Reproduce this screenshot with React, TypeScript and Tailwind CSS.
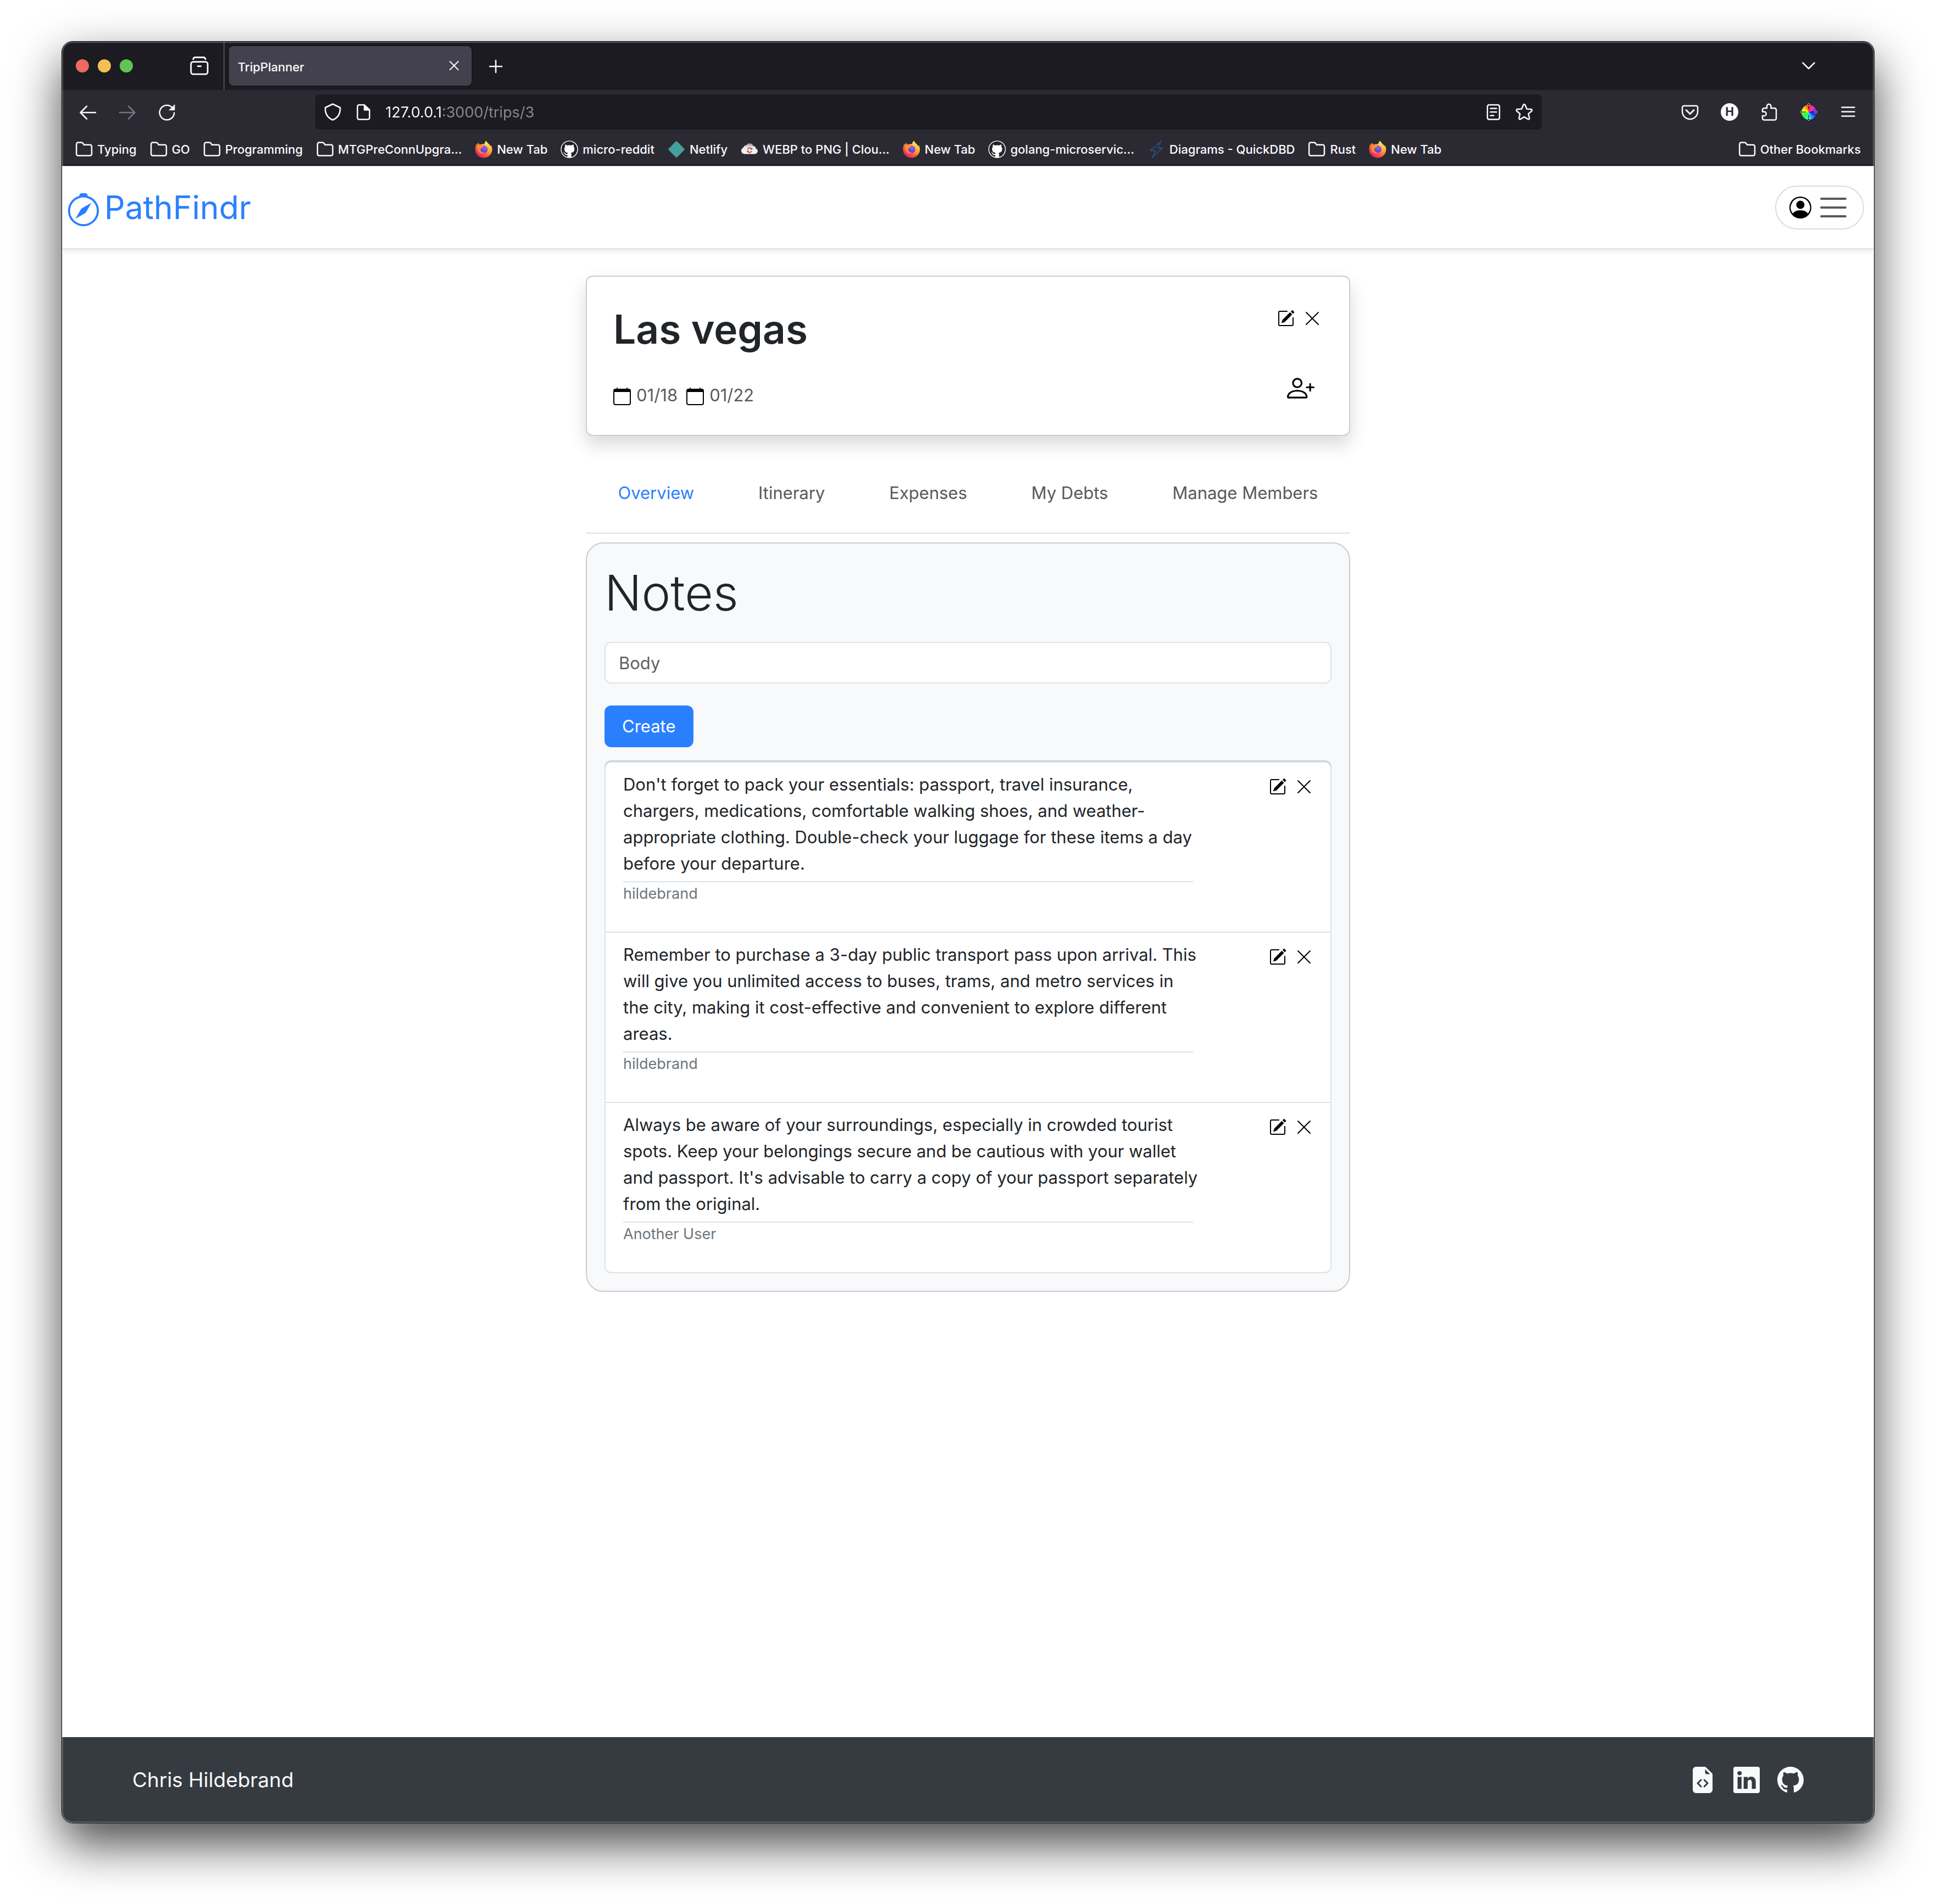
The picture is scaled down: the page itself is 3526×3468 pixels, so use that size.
import type { ReactNode } from "react";
import {
  BsCalendar,
  BsCompass,
  BsFileEarmarkCodeFill,
  BsGithub,
  BsLinkedin,
  BsPencilSquare,
  BsPersonCircle,
  BsPersonPlus,
  BsXLg,
} from "react-icons/bs";

/* ---------- Browser chrome icons ---------- */

type IconProps = { className?: string; children: ReactNode };

function Glyph({ className = "size-8", children }: IconProps) {
  return (
    <svg
      viewBox="0 0 32 32"
      className={className}
      fill="none"
      stroke="currentColor"
      strokeWidth="2.5"
      strokeLinecap="round"
      strokeLinejoin="round"
      aria-hidden="true"
    >
      {children}
    </svg>
  );
}

function FolderIcon() {
  return (
    <Glyph className="size-8 shrink-0">
      <path d="M2.2 24.500V6.500a3 3 0 0 1 3-3h6.200a3 3 0 0 1 2.300 1.100L16 7.700h11a3 3 0 0 1 3 3v13.800a3 3 0 0 1-3 3H5.200a3 3 0 0 1-3-3z" />
    </Glyph>
  );
}

function FirefoxIcon() {
  return (
    <svg viewBox="0 0 32 32" className="size-8 shrink-0" aria-hidden="true">
      <defs>
        <linearGradient id="ff-body" x1="0.85" y1="0.1" x2="0.2" y2="0.95">
          <stop offset="0" stopColor="#fff04f" />
          <stop offset="0.35" stopColor="#ffa436" />
          <stop offset="0.65" stopColor="#ff5a3c" />
          <stop offset="1" stopColor="#e31a72" />
        </linearGradient>
        <radialGradient id="ff-globe" cx="0.6" cy="0.25" r="0.8">
          <stop offset="0" stopColor="#a457f0" />
          <stop offset="0.6" stopColor="#6a4be0" />
          <stop offset="1" stopColor="#4c3fc9" />
        </radialGradient>
        <linearGradient id="ff-flame" x1="0.5" y1="0" x2="0.5" y2="1">
          <stop offset="0" stopColor="#fff25a" />
          <stop offset="1" stopColor="#ff9a2e" />
        </linearGradient>
      </defs>
      <path
        d="M20.500 0.600c-1.800 1.400-2.700 3.500-3 5.700C14.500 6 11.800 6.300 9.400 7.300 7.800 7 6.900 5.600 6.700 3.900 5.300 5 4.600 6.400 4.400 7.900 3.700 7.200 3.300 6.300 3.300 5.400 1.400 8.600 0.600 12 0.600 16c0 8.600 6.800 15.600 15.400 15.600S31.400 24.800 31.400 16.600c0-3-.9-6.300-2.600-8.600.2 1 .3 1.900.2 2.800C26.800 6.500 22.200 5 20.500.6z"
        fill="url(#ff-body)"
      />
      <circle cx="16.200" cy="16" r="6.800" fill="url(#ff-globe)" />
      <path
        d="M20.500 0.600c-2.800 2.200-3.500 5.700-2.900 8.500 3.500.9 6.100 3.600 6.100 7.200 0 2.800-1.600 5.200-4 6.500 5.500-.3 9.300-5 9.300-10.500C27.600 7.800 22.200 5.200 20.500.6z"
        fill="url(#ff-flame)"
        opacity="0.85"
      />
      <path
        d="M4.500 9.500c2.300-1 4.800-.9 6.800.3 1.600.2 3 .1 4.100.8-.3 1.600-2.300 2.200-3.600 2.700-.8.900-.4 1.900-2 2.600.3 3.800 3.800 6.600 8 5.700-2.600 2.500-8 2.400-10.800-.9-2.600-3-3-7.300-2.500-11.200z"
        fill="#ff8b34"
      />
    </svg>
  );
}

function GithubFavicon() {
  return (
    <svg viewBox="0 0 16 16" className="size-8 shrink-0" aria-hidden="true">
      <circle cx="8" cy="8" r="7.900" fill="#ffffff" />
      <path
        transform="translate(0.8 0.8) scale(0.9)"
        fill="#24232a"
        d="M8 0C3.580 0 0 3.580 0 8c0 3.540 2.290 6.530 5.470 7.590.4.070.55-.17.55-.38 0-.19-.01-.82-.01-1.490-2.010.37-2.530-.49-2.690-.94-.09-.23-.48-.94-.82-1.130-.28-.15-.68-.52-.01-.53.63-.01 1.080.58 1.230.82.720 1.210 1.870.87 2.330.66.070-.52.28-.87.51-1.070-1.780-.2-3.640-.89-3.640-3.950 0-.87.31-1.590.82-2.150-.08-.2-.36-1.020.08-2.120 0 0 .67-.21 2.200.82.640-.18 1.320-.27 2-.27s1.360.09 2 .27c1.530-1.040 2.200-.82 2.200-.82.440 1.100.16 1.920.08 2.120.51.56.82 1.270.82 2.150 0 3.070-1.870 3.750-3.650 3.950.29.25.54.73.54 1.480 0 1.070-.01 1.930-.01 2.200 0 .21.15.46.55.38A8.010 8.010 0 0 0 16 8c0-4.420-3.580-8-8-8"
      />
    </svg>
  );
}

function NetlifyIcon() {
  return (
    <svg viewBox="0 0 32 32" className="size-8 shrink-0" aria-hidden="true">
      <rect x="5" y="5" width="22" height="22" rx="2.200" fill="#43a09d" transform="rotate(45 16 16)" />
    </svg>
  );
}

function CloudIcon() {
  return (
    <svg viewBox="0 0 32 32" className="size-8 shrink-0" aria-hidden="true">
      <defs>
        <linearGradient id="cloud-fill" x1="0" y1="0" x2="0" y2="1">
          <stop offset="0" stopColor="#8a8a8c" />
          <stop offset="0.35" stopColor="#e8e8e8" />
          <stop offset="1" stopColor="#f7f7f7" />
        </linearGradient>
      </defs>
      <path
        d="M7.500 24.500C3.800 24.500 1 22 1 18.600c0-2.800 1.700-5 4.200-5.800.3-2.600 2.300-4.200 4.700-4 1.400-2.500 3.700-3.800 6.300-3.800 3.200 0 5.800 2 6.600 4.900 2.900-.1 4.800 1.900 4.700 4.500 2.100.8 3.500 2.500 3.500 4.700 0 3.100-2.400 5.400-5.600 5.400z"
        fill="url(#cloud-fill)"
      />
      <path d="M12.800 15.500a3.900 3.900 0 0 1 7-.1M19.800 19.300a3.900 3.900 0 0 1-7 .1" fill="none" stroke="#cf4a45" strokeWidth="2.200" />
      <path d="M21.200 12.800v4h-3.800zM11.400 21.800v-4h3.800z" fill="#cf4a45" />
    </svg>
  );
}

function BoltIcon() {
  return (
    <svg viewBox="0 0 32 32" className="size-8 shrink-0" aria-hidden="true">
      <path
        d="M24.500 1 5 18.500h9.500L8.500 31 27 13.500h-8.500z"
        fill="none"
        stroke="#245a94"
        strokeWidth="1.300"
        strokeLinejoin="round"
      />
    </svg>
  );
}

function ColorWheelIcon() {
  return (
    <span className="grid size-8 place-items-center">
      <span className="col-start-1 row-start-1 size-[27px] rounded-full bg-[conic-gradient(#ff2a1a,#ff2ad4_45deg,#7a1cff_80deg,#1c2bff_110deg,#1cc8ff_160deg,#2affc0_190deg,#2aff2a_240deg,#e8ff1c_290deg,#ff9a1c_330deg,#ff2a1a)]" />
      <svg viewBox="0 0 32 32" className="col-start-1 row-start-1 size-8" fill="none" aria-hidden="true">
        <path d="M16 4v7M16 21v7M4 16h7M21 16h7" stroke="#111111" strokeWidth="1.500" opacity="0.7" />
        <g fill="#1a1a1a" stroke="#e8e8e8" strokeWidth="0.800">
          <circle cx="16" cy="2.600" r="2" />
          <circle cx="16" cy="29.400" r="2" />
          <circle cx="2.600" cy="16" r="2" />
          <circle cx="29.400" cy="16" r="2" />
        </g>
      </svg>
    </span>
  );
}

/* ---------- Browser chrome ---------- */

const bookmarks: { label: string; icon: ReactNode }[] = [
  { label: "Typing", icon: <FolderIcon /> },
  { label: "GO", icon: <FolderIcon /> },
  { label: "Programming", icon: <FolderIcon /> },
  { label: "MTGPreConnUpgra...", icon: <FolderIcon /> },
  { label: "New Tab", icon: <FirefoxIcon /> },
  { label: "micro-reddit", icon: <GithubFavicon /> },
  { label: "Netlify", icon: <NetlifyIcon /> },
  { label: "WEBP to PNG | Clou...", icon: <CloudIcon /> },
  { label: "New Tab", icon: <FirefoxIcon /> },
  { label: "golang-microservic...", icon: <GithubFavicon /> },
  { label: "Diagrams - QuickDBD", icon: <BoltIcon /> },
  { label: "Rust", icon: <FolderIcon /> },
  { label: "New Tab", icon: <FirefoxIcon /> },
];

function Bookmark({ label, icon }: { label: string; icon: ReactNode }) {
  return (
    <a href="#" className="flex items-center gap-2 whitespace-nowrap">
      {icon}
      {label}
    </a>
  );
}

function TabStrip() {
  return (
    <div className="flex h-[88px] items-center bg-[#1c1b22]">
      <div className="flex items-center gap-4 pl-[25px]">
        <span className="size-6 rounded-full bg-[#ed6a5e]" />
        <span className="size-6 rounded-full bg-[#f5bf4f]" />
        <span className="size-6 rounded-full bg-[#61c554]" />
      </div>
      <button type="button" aria-label="Recent browsing" className="ml-[103px]">
        <Glyph className="size-9">
          <rect x="2.500" y="9.500" width="27" height="20" rx="3.500" />
          <path d="M6 5.200C6.500 3.200 7.800 2.200 9.500 2.200h13c1.700 0 3 1 3.500 3M13.500 16.500h5" />
        </Glyph>
      </button>
      <div className="ml-[26px] flex h-full items-center border-l-2 border-[#4b4b55] pl-2">
        <div className="flex h-18 w-[442px] items-center justify-between rounded-lg bg-[#42414d] pr-4 pl-4 shadow-[0_0_4px_rgba(0,0,0,0.5)]">
          <span className="pt-1">TripPlanner</span>
          <button type="button" aria-label="Close tab">
            <Glyph>
              <path d="M8.500 8l15 15M23.500 8l-15 15" strokeWidth="2" />
            </Glyph>
          </button>
        </div>
        <button type="button" aria-label="New tab" className="ml-7">
          <Glyph>
            <path d="M16 6v22M5 17h22" />
          </Glyph>
        </button>
      </div>
      <button type="button" aria-label="List all tabs" className="mr-[103px] ml-auto">
        <Glyph>
          <path d="M5.500 10.500 16 21 26.500 10.500" />
        </Glyph>
      </button>
    </div>
  );
}

function Toolbar() {
  return (
    <div className="flex items-center py-2 pr-[31px] pl-[31px]">
      <div className="flex items-center gap-10 pr-[254px]">
        <button type="button" aria-label="Back">
          <Glyph>
            <path d="M30 17H3M14 5.500 2.500 17 14 28.500" />
          </Glyph>
        </button>
        <button type="button" aria-label="Forward" className="text-[#75747f]">
          <Glyph>
            <path d="M2 17h27M18 5.500 29.500 17 18 28.500" />
          </Glyph>
        </button>
        <button type="button" aria-label="Reload">
          <Glyph>
            <path d="M29.300 17.500A13.300 13.300 0 1 1 25.800 8" />
            <path d="M30 3v9.500h-9.500z" fill="currentColor" strokeWidth="1" />
          </Glyph>
        </button>
      </div>
      <div className="flex h-16 flex-1 items-center gap-6 rounded-lg bg-[#1c1b22] px-4">
        <button type="button" aria-label="Tracking protection">
          <Glyph>
            <path d="M16 1.500 29.500 8c.6 9.500-3 18-13.500 22.500C5.500 26 1.900 17.500 2.500 8z" />
          </Glyph>
        </button>
        <button type="button" aria-label="Site information">
          <Glyph>
            <path d="M17 3H8a3 3 0 0 0-3 3v20.500a3 3 0 0 0 3 3h16a3 3 0 0 0 3-3V12z" />
            <path d="M17.500 3v9.500H27z" fill="currentColor" strokeWidth="2" />
          </Glyph>
        </button>
        <input
          type="text"
          aria-label="Address"
          defaultValue="127.0.0.1:3000/trips/3"
          className="h-12 min-w-0 flex-1 bg-[linear-gradient(90deg,#fbfbfe_102px,#8b8a94_102px)] bg-clip-text text-[27px] font-normal text-transparent outline-none"
        />
        <button type="button" aria-label="Reader view">
          <Glyph>
            <rect x="5" y="3" width="22" height="26.500" rx="3" />
            <path d="M10.500 9.500h11M10.500 16h11M10.500 22.500h6" />
          </Glyph>
        </button>
        <button type="button" aria-label="Bookmark this page">
          <Glyph>
            <path d="M16 2c.8 0 1.400.500 1.700 1.200l3.100 7.300 7.800.6c1.600.1 2.200 2 1 3.100l-6 5.200 1.900 7.800c.3 1.500-1.300 2.700-2.600 1.900L16 24.900l-6.900 4.200c-1.300.8-2.900-.4-2.600-1.900l1.900-7.800-6-5.200c-1.200-1.100-.6-3 1-3.100l7.800-.6 3.100-7.300C14.600 2.500 15.200 2 16 2z" />
          </Glyph>
        </button>
      </div>
      <div className="flex items-center gap-10 pl-[254px]">
        <button type="button" aria-label="Save to Pocket">
          <Glyph>
            <path d="M5 4.800h22a3 3 0 0 1 3 3V15a14 14 0 0 1-28 0V7.800a3 3 0 0 1 3-3z" />
            <path d="M9 12.500l7 7 7-7" strokeWidth="3" />
          </Glyph>
        </button>
        <button
          type="button"
          aria-label="Account"
          className="flex size-8 items-center justify-center rounded-full bg-[#fbfbfe] text-[21px] font-bold text-[#2b2a33]"
        >
          H
        </button>
        <button type="button" aria-label="Extensions">
          <Glyph>
            <path d="M4 12.500V12a3 3 0 0 1 3-3h5V5.500a3.700 3.700 0 0 1 7.400 0V9H26a3 3 0 0 1 3 3v15.500a3 3 0 0 1-3 3H7a3 3 0 0 1-3-3V23h3a3.800 3.800 0 0 0 0-7.600H4z" />
          </Glyph>
        </button>
        <button type="button" aria-label="Color picker">
          <ColorWheelIcon />
        </button>
        <button type="button" aria-label="Application menu">
          <Glyph>
            <path d="M4.500 7.500h23M4.500 15.500h23M4.500 23.500h23" />
          </Glyph>
        </button>
      </div>
    </div>
  );
}

function BrowserChrome() {
  return (
    <div className="border-b-2 border-[#0c0c14] bg-[#2b2a33] text-[22px] font-medium text-[#fbfbfe]">
      <TabStrip />
      <Toolbar />
      <div className="flex h-14 items-center px-6">
        <nav aria-label="Bookmarks" className="flex items-center gap-6">
          {bookmarks.map((b, i) => (
            <Bookmark key={i} {...b} />
          ))}
        </nav>
        <div className="ml-auto">
          <Bookmark label="Other Bookmarks" icon={<FolderIcon />} />
        </div>
      </div>
    </div>
  );
}

/* ---------- Page ---------- */

const tabs = ["Overview", "Itinerary", "Expenses", "My Debts", "Manage Members"];

const notes = [
  {
    body: "Don't forget to pack your essentials: passport, travel insurance, chargers, medications, comfortable walking shoes, and weather-appropriate clothing. Double-check your luggage for these items a day before your departure.",
    author: "hildebrand",
  },
  {
    body: "Remember to purchase a 3-day public transport pass upon arrival. This will give you unlimited access to buses, trams, and metro services in the city, making it cost-effective and convenient to explore different areas.",
    author: "hildebrand",
  },
  {
    body: "Always be aware of your surroundings, especially in crowded tourist spots. Keep your belongings secure and be cautious with your wallet and passport. It's advisable to carry a copy of your passport separately from the original.",
    author: "Another User",
  },
];

function EditActions({ name }: { name: string }) {
  return (
    <div className="flex gap-4 text-black">
      <button type="button" aria-label={`Edit ${name}`}>
        <BsPencilSquare className="size-8" />
      </button>
      <button type="button" aria-label={`Delete ${name}`}>
        <BsXLg className="size-8" />
      </button>
    </div>
  );
}

function SiteHeader() {
  return (
    <header className="flex h-[152px] items-center justify-between border-y-2 border-[#dee2e6] pr-[18px] pl-[9px] shadow-[0_4px_8px_rgba(0,0,0,0.075)]">
      <a href="#" className="flex items-center gap-2 text-[59px] leading-[72px] text-[#2a7fff]">
        <BsCompass className="mt-2 size-15" />
        PathFindr
      </a>
      <button
        type="button"
        aria-label="Account menu"
        className="flex h-20 items-center gap-[10px] rounded-full border-2 border-[#dcdcdc] px-6"
      >
        <BsPersonCircle className="size-10 text-black" />
        <svg viewBox="0 0 30 30" className="size-15" stroke="#58595b" strokeWidth="2" strokeLinecap="round" aria-hidden="true">
          <path d="M4 7h22M4 15h22M4 23h22" />
        </svg>
      </button>
    </header>
  );
}

function TripCard() {
  return (
    <section className="flex justify-between rounded-xl border-2 border-[#cfcfcf] bg-white p-12 shadow-[0_16px_32px_rgba(0,0,0,0.15)]">
      <div>
        <h1 className="text-[73px] leading-24 font-semibold">Las vegas</h1>
        <div className="mt-12 flex items-center gap-4 text-[31px] leading-12 text-[#5a5b5d]">
          <span className="flex items-center gap-[10px]">
            <BsCalendar className="mt-1 size-8 text-black" />
            01/18
          </span>
          <span className="flex items-center gap-[10px]">
            <BsCalendar className="mt-1 size-8 text-black" />
            01/22
          </span>
        </div>
      </div>
      <div className="flex flex-col items-end justify-between py-3 pr-[3px]">
        <EditActions name="trip" />
        <button type="button" aria-label="Add member" className="mr-3 text-black">
          <BsPersonPlus className="size-[50px]" />
        </button>
      </div>
    </section>
  );
}

function TripTabs() {
  return (
    <nav aria-label="Trip sections" className="mt-8 flex justify-around border-b-2 border-[#dee2e6] py-12 text-[31px] leading-12">
      {tabs.map((tab, i) => (
        <a key={tab} href="#" className={i === 0 ? "text-[#2a7fff]" : "text-[#58595b]"}>
          {tab}
        </a>
      ))}
    </nav>
  );
}

function NotesPanel() {
  return (
    <section className="mt-4 rounded-[32px] border-2 border-[#cbcccf] bg-[#f8f9fb] p-8">
      <h2 className="text-[89px] leading-[115px] font-light">Notes</h2>
      <form onSubmit={(e) => e.preventDefault()} className="mt-8">
        <input
          type="text"
          aria-label="Body"
          placeholder="Body"
          className="block h-19 w-full rounded-xl border-2 border-[#dee2e6] bg-white px-6 text-[31px] outline-none placeholder:text-[#5f6164]"
        />
        <button type="submit" className="mt-10 block h-19 rounded-xl bg-[#2a7fff] px-8 text-[31px] text-white">
          Create
        </button>
      </form>
      <ul className="mt-[26px] divide-y-2 divide-[#dee2e6] rounded-xl border-2 border-[#dee2e6] bg-white shadow-[0_-2px_0_#c9cbcf]">
        {notes.map((note, i) => (
          <li key={i} className="flex justify-between px-8 pt-4 pb-12">
            <div className="w-[1038px]">
              <p className="-mr-3 text-[31px] leading-12">{note.body}</p>
              <p className="mt-2 border-t-2 border-[#dee2e6] text-[27px] leading-[42px] text-[#6c757d]">{note.author}</p>
            </div>
            <div className="pt-3">
              <EditActions name="note" />
            </div>
          </li>
        ))}
      </ul>
    </section>
  );
}

function SiteFooter() {
  return (
    <footer className="mt-auto flex h-[156px] items-center justify-between bg-[#363a41] px-32 text-[#f8f9fa]">
      <span className="text-[37px]">Chris Hildebrand</span>
      <div className="flex gap-8">
        <a href="#" aria-label="Resume">
          <BsFileEarmarkCodeFill className="size-12" />
        </a>
        <a href="#" aria-label="LinkedIn">
          <BsLinkedin className="size-12" />
        </a>
        <a href="#" aria-label="GitHub">
          <BsGithub className="size-12" />
        </a>
      </div>
    </footer>
  );
}

export default function App() {
  return (
    <div className="flex min-h-screen flex-col bg-white px-28 pt-[75px] pb-[147px] font-[Inter,'Noto_Sans',sans-serif] text-[#212529]">
      <div className="relative flex flex-1 flex-col overflow-hidden rounded-[20px] border border-black bg-white shadow-[0_38px_88px_rgba(0,0,0,0.72)]">
        <BrowserChrome />
        <SiteHeader />
        <main className="mx-auto w-full max-w-[1392px] py-12">
          <TripCard />
          <TripTabs />
          <NotesPanel />
        </main>
        <SiteFooter />
        <div className="pointer-events-none absolute inset-0 rounded-[19px] border-2 border-white/25" />
      </div>
    </div>
  );
}
